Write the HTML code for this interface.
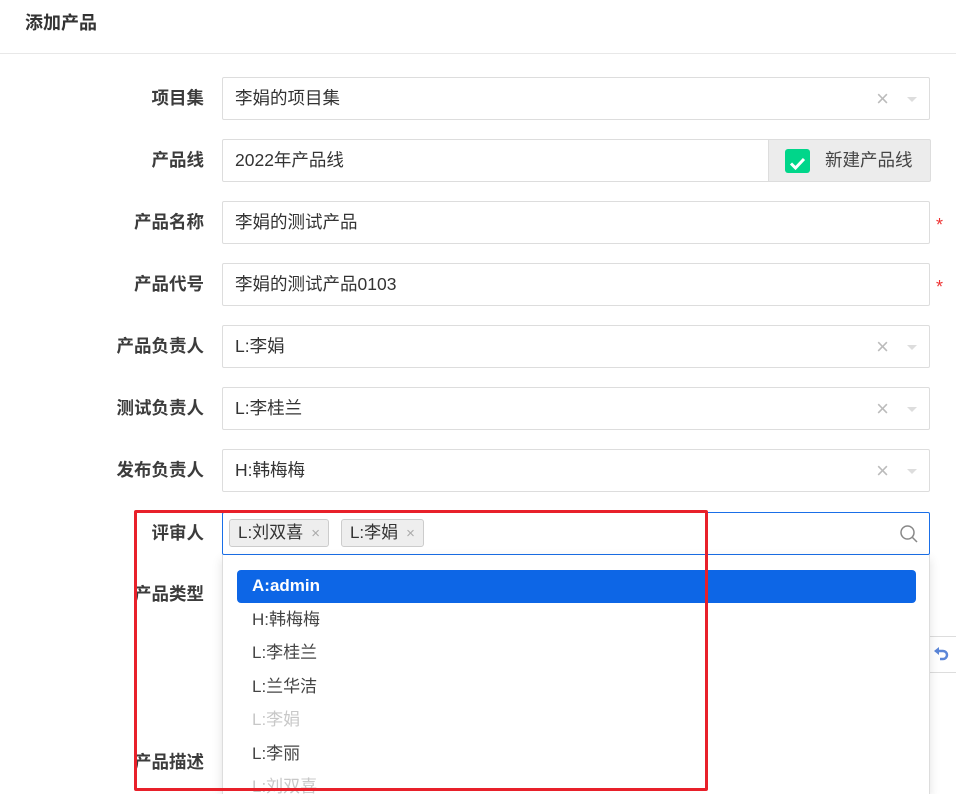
<!DOCTYPE html>
<html><head><meta charset="utf-8"><style>
*{box-sizing:border-box;margin:0;padding:0}
html,body{width:956px;height:794px;overflow:hidden}
body{background:#fff;font-family:"Liberation Sans","Noto Sans CJK SC",sans-serif;color:#333;position:relative}
.hd{position:absolute;left:0;top:0;width:956px;height:54px;border-bottom:1px solid #e8e8e8}
.hd span{position:absolute;left:25px;top:11px;font-size:18px;line-height:24px;font-weight:bold;color:#333}
.lbl{position:absolute;right:752px;font-size:17.5px;line-height:24px;font-weight:bold;color:#3c3c3c;white-space:nowrap}
.inp{position:absolute;left:222px;width:708px;height:43px;border:1px solid #ddd;border-radius:2px;font-size:17.5px;padding-left:12px;line-height:41px;color:#333}
.x{position:absolute;right:40px;top:0;color:#bbb;font-size:22px}
.ar{position:absolute;right:12px;top:19px;border:5px solid transparent;border-top:5px solid #ddd}
.star{position:absolute;left:936px;color:#e33;font-size:18px;line-height:24px}
.tag{display:inline-block;height:28px;line-height:26px;border:1px solid #ccc;background:#eee;border-radius:3px;padding:0 8px 0 8px;font-size:17px;margin-right:12px;vertical-align:top;margin-top:6px}
.tag i{font-style:normal;color:#aaa;font-size:15px;margin-left:8px}
.dd{position:absolute;left:222px;top:555px;width:708px;height:239px;background:#fff;border-left:1px solid #ddd;border-right:1px solid #ddd;box-shadow:0 4px 10px rgba(0,0,0,.12);overflow:hidden}
.it{position:absolute;left:29px;font-size:17px;line-height:24px;color:#444}
</style></head><body>
<div class="hd"><span>添加产品</span></div>

<div class="lbl" style="top:86px">项目集</div>
<div class="inp" style="top:77px">李娟的项目集<span class="x">×</span><span class="ar"></span></div>

<div class="lbl" style="top:148px">产品线</div>
<div class="inp" style="top:139px">2022年产品线
<div style="position:absolute;left:545px;top:-1px;width:163px;height:43px;background:#ececec;border:1px solid #ddd;border-radius:0 2px 2px 0">
<div style="position:absolute;left:16px;top:9px;width:25px;height:24px;background:#00d68a;border-radius:3px"><svg width="25" height="24" viewBox="0 0 25 24"><path d="M6 12.5l4.5 4.5 8.5-9" stroke="#fff" stroke-width="3" fill="none"/></svg></div>
<span style="position:absolute;left:56px;top:0;color:#444">新建产品线</span></div></div>

<div class="lbl" style="top:210px">产品名称</div>
<div class="inp" style="top:201px">李娟的测试产品</div><span class="star" style="top:213px">*</span>

<div class="lbl" style="top:272px">产品代号</div>
<div class="inp" style="top:263px">李娟的测试产品0103</div><span class="star" style="top:275px">*</span>

<div class="lbl" style="top:334px">产品负责人</div>
<div class="inp" style="top:325px">L:李娟<span class="x">×</span><span class="ar"></span></div>

<div class="lbl" style="top:396px">测试负责人</div>
<div class="inp" style="top:387px">L:李桂兰<span class="x">×</span><span class="ar"></span></div>

<div class="lbl" style="top:458px">发布负责人</div>
<div class="inp" style="top:449px">H:韩梅梅<span class="x">×</span><span class="ar"></span></div>

<div class="lbl" style="top:521px">评审人</div>
<div class="inp" style="top:512px;border-color:#1a6fe8;padding-left:6px;line-height:normal"><span class="tag">L:刘双喜<i>×</i></span><span class="tag">L:李娟<i>×</i></span>
<svg style="position:absolute;right:10px;top:11px" width="20" height="20" viewBox="0 0 20 20"><circle cx="8.5" cy="8.5" r="6.5" stroke="#888" stroke-width="1.5" fill="none"/><path d="M13.5 13.5l4.5 4.5" stroke="#888" stroke-width="1.5"/></svg></div>

<div class="lbl" style="top:582px">产品类型</div>
<div class="lbl" style="top:750px">产品描述</div>

<div style="position:absolute;left:930px;top:636px;width:26px;height:37px;border-top:1px solid #ddd;border-bottom:1px solid #ddd"></div>
<svg style="position:absolute;left:932px;top:644px" width="18" height="18" viewBox="0 0 18 18"><path d="M4 7h7a4 4 0 0 1 0 8H8" stroke="#5b86d8" stroke-width="2.5" fill="none"/><path d="M2 7l5-4v8z" fill="#5b86d8"/></svg>

<div class="dd">
<div style="position:absolute;left:14px;top:15px;width:679px;height:33px;background:#0d66e6;border-radius:4px"></div>
<div class="it" style="top:19px;color:#fff;font-weight:bold">A:admin</div>
<div class="it" style="top:53px">H:韩梅梅</div>
<div class="it" style="top:86px">L:李桂兰</div>
<div class="it" style="top:120px">L:兰华洁</div>
<div class="it" style="top:153px;color:#c8c8c8">L:李娟</div>
<div class="it" style="top:187px">L:李丽</div>
<div class="it" style="top:220px;color:#c8c8c8">L:刘双喜</div>
</div>

<div style="position:absolute;left:134px;top:510px;width:574px;height:281px;border:3px solid #e8202a;border-radius:2px"></div>
</body></html>
